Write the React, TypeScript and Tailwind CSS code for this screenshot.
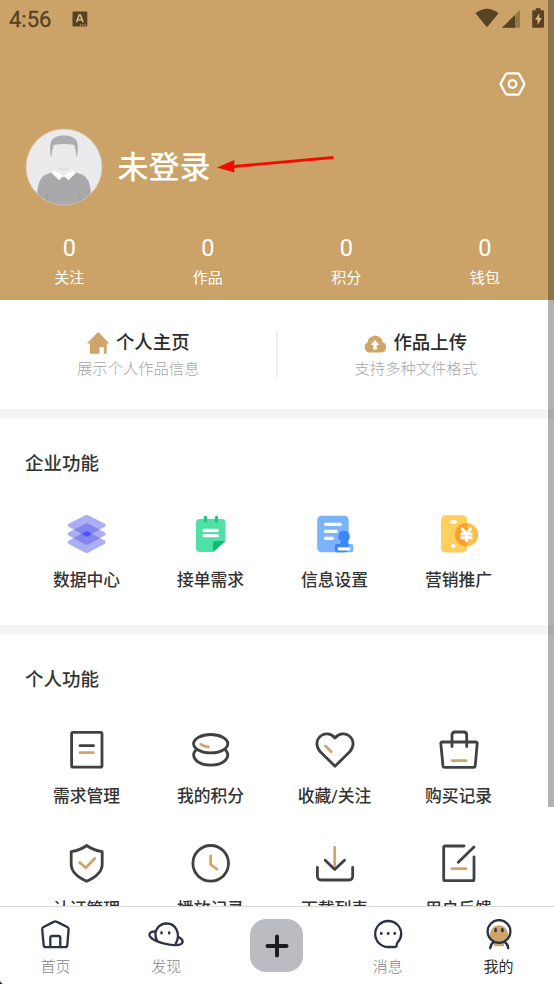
import type { ReactNode } from "react";
import clsx from "clsx";

interface MenuItem {
  label: string;
  icon: ReactNode;
}

const DARK = "#414141";
const GOLD = "#cfa56a";
const NAVY = "#2c3246";

function LineIcon({ children }: { children: ReactNode }) {
  return (
    <svg
      className="h-10 w-10"
      viewBox="0 0 40 40"
      fill="none"
      stroke={DARK}
      strokeWidth="2.8"
      strokeLinecap="round"
      strokeLinejoin="round"
    >
      {children}
    </svg>
  );
}

function NavIcon({ children }: { children: ReactNode }) {
  return (
    <svg
      className="h-8 w-9"
      viewBox="0 0 36 32"
      fill="none"
      stroke={NAVY}
      strokeWidth="2.3"
      strokeLinecap="round"
      strokeLinejoin="round"
    >
      {children}
    </svg>
  );
}

const stats = [
  { label: "关注", value: 0 },
  { label: "作品", value: 0 },
  { label: "积分", value: 0 },
  { label: "钱包", value: 0 },
];

const companyItems: MenuItem[] = [
  {
    label: "数据中心",
    icon: (
      <svg className="h-10 w-10" viewBox="0 0 40 40">
        <g fill="#5a5dea" fillOpacity="0.5">
          <path d="M18.3 1.2q1.4-.8 2.8 0L37.5 9.6q2.4 1.6 0 3.4L21.1 21.8q-1.4.8-2.8 0L1.9 13q-2.4-1.8 0-3.4z" />
          <path d="M18.3 9.7q1.4-.8 2.8 0L37.5 18.3q2.4 1.7 0 3.4L21.1 30.4q-1.4.8-2.8 0L1.9 21.7q-2.4-1.7 0-3.4z" />
          <path d="M18.3 17.8q1.4-.8 2.8 0L37.5 26.6q2.4 1.7 0 3.4L21.1 38.7q-1.4.8-2.8 0L1.9 30q-2.4-1.7 0-3.4z" />
        </g>
        <path d="M19.7 17.3l5 2.7-5 2.7-5-2.7z" fill="#4b4ffb" />
      </svg>
    ),
  },
  {
    label: "接单需求",
    icon: (
      <svg className="h-10 w-10" viewBox="0 0 40 40">
        <path d="M9 5h21.5a4 4 0 0 1 4 4v18L22 38H9a4 4 0 0 1-4-4V9a4 4 0 0 1 4-4z" fill="#4ee0a4" />
        <path d="M34.5 27L22 38v-8.5a2.5 2.5 0 0 1 2.5-2.5z" fill="#0fbd71" />
        <path d="M14.5 3.5v3.5M25.5 3.5v3.5" stroke="#1fc580" strokeWidth="3.4" strokeLinecap="round" />
        <path d="M13 16.3h13.5M13 21.7h13.5" stroke="#fff" strokeWidth="3.2" strokeLinecap="round" />
      </svg>
    ),
  },
  {
    label: "信息设置",
    icon: (
      <svg className="h-10 w-10" viewBox="0 0 40 40">
        <rect x="2.2" y="1.8" width="31.5" height="36.5" rx="4.5" fill="#7cb4fc" />
        <path d="M10.5 10.3h14.8M10.5 17.3h10.8M10.5 24.3h7" stroke="#fff" strokeWidth="3.2" strokeLinecap="round" />
        <rect x="19.8" y="30" width="18.5" height="8.3" rx="2" fill="#7cb4fc" />
        <path d="M21.8 30h11.9v4.3a4 4 0 0 1-4 4h-7.9a2 2 0 0 1-2-2V32a2 2 0 0 1 2-2z" fill="#3b86f7" />
        <path d="M29 16.8a5.7 5.7 0 0 1 3.4 10.3c-.4 1.3.3 2.9 1.3 2.900h-9.400c1 0 1.700-1.600 1.300-2.900A5.700 5.700 0 0 1 29 16.800z" fill="#3b86f7" />
        <rect x="22.7" y="33.2" width="12.5" height="3.4" rx="1" fill="#fff" />
      </svg>
    ),
  },
  {
    label: "营销推广",
    icon: (
      <svg className="h-10 w-10" viewBox="0 0 40 40">
        <rect x="2" y="1.2" width="26" height="37.4" rx="4.5" fill="#fdcf5c" />
        <circle cx="27.4" cy="20.7" r="11.8" fill="#fdbf4b" />
        <path d="M28 8.9v23.600a11.800 11.800 0 0 1 0-23.600z" fill="#fba030" />
        <rect x="11" y="6.2" width="7" height="3.6" rx="1.8" fill="#fff" />
        <circle cx="14.3" cy="32" r="2.1" fill="#fff" />
        <path d="M23.3 15l4 4.8 4-4.8M27.4 20v6.5M22.6 20h9.6M22.6 23.8h9.6" fill="none" stroke="#fff" strokeWidth="3" strokeLinecap="round" />
      </svg>
    ),
  },
];

const personalItems: MenuItem[] = [
  {
    label: "需求管理",
    icon: (
      <LineIcon>
        <rect x="4.6" y="2.4" width="30.4" height="34.8" rx="1.5" />
        <path d="M13 15.7h13.5" />
        <path d="M13 22.7h13.5" stroke={GOLD} />
      </LineIcon>
    ),
  },
  {
    label: "我的积分",
    icon: (
      <LineIcon>
        <ellipse cx="19.7" cy="13.7" rx="17.1" ry="9.2" />
        <path d="M5.3 19.5C-1.5 26.5 6 35.2 19.7 35.2S41 26.5 34.1 19.5" />
        <path d="M9.8 14.3q3 2.2 7.7 2.5" stroke={GOLD} />
      </LineIcon>
    ),
  },
  {
    label: "收藏/关注",
    icon: (
      <LineIcon>
        <path d="M20 36.2L5.3 21.8C.4 16.6 1.2 9.5 5.6 6c4.5-3.5 10.7-2.6 14.4 2 3.7-4.6 9.9-5.5 14.4-2 4.400 3.500 5.200 10.600.3 15.800z" />
        <path d="M10.3 16l6 5.8" stroke={GOLD} />
      </LineIcon>
    ),
  },
  {
    label: "购买记录",
    icon: (
      <LineIcon>
        <path d="M3.2 12h33.6q1.5 0 1.4 1.5L36.2 36q-.2 1.4-1.6 1.4H5.6Q4.2 37.4 4 36L1.8 13.5Q1.7 12 3.2 12z" />
        <path d="M13 16.5V5q0-3 3-3h8.7q3 0 3 3v11.5" />
        <path d="M13.2 30.7h13.8" stroke={GOLD} />
      </LineIcon>
    ),
  },
  {
    label: "认证管理",
    icon: (
      <LineIcon>
        <path d="M19.7 2.5q6.5 4.8 15.5 6.2v12.5C35.2 29.5 28 34.5 19.7 38.3 11.4 34.5 4.2 29.5 4.2 21.2V8.7q9-1.4 15.5-6.2z" />
        <path d="M12.7 19.5l6 5.3 9-9.3" stroke={GOLD} />
      </LineIcon>
    ),
  },
  {
    label: "播放记录",
    icon: (
      <LineIcon>
        <circle cx="19.7" cy="20.3" r="17.8" />
        <path d="M19.7 12.8v8.9l6.2 4.5" stroke={GOLD} />
      </LineIcon>
    ),
  },
  {
    label: "下载列表",
    icon: (
      <LineIcon>
        <path d="M19.7 4.5V23" stroke={GOLD} />
        <path d="M10.2 17.2l9.5 9.3 9.8-9.3" />
        <path d="M2.4 24.5V33q0 4 4 4h27.3q4 0 4-4v-8.5" />
      </LineIcon>
    ),
  },
  {
    label: "用户反馈",
    icon: (
      <LineIcon>
        <path d="M25 3H6.2Q4.7 3 4.7 4.5v31.7q0 1.5 1.5 1.5h27.3q1.5 0 1.5-1.5V14" />
        <path d="M19.3 19.2L35 3.9" />
        <path d="M13 25.7h14" stroke={GOLD} />
      </LineIcon>
    ),
  },
];

function StatusBar() {
  return (
    <div className="flex h-10 items-center pb-1 pl-[9px] pr-[10px] text-[#574222]">
      <span className="mt-1 text-[22px] leading-none [-webkit-text-stroke:0.3px_#574222]">4:56</span>
      <svg className="mt-px ml-[21px] h-4 w-4" viewBox="0 0 16 16">
        <rect x="0.5" y="0.5" width="14.8" height="15" rx="1.3" fill="currentColor" />
        <path d="M4.5 11.2L7.2 4h1.2l2.7 7.2M5.8 8.7h4" fill="none" stroke="#dbb987" strokeWidth="1.6" />
        <path d="M8 14h1.2M10.3 14h1.2M12.5 14h1.2" stroke="#dbb987" strokeWidth="1.2" />
      </svg>
      <svg className="ml-auto h-5 w-6" viewBox="0 0 24 20">
        <path d="M.5 5.3q11.5-9.300 23 0L12 19.300z" fill="currentColor" />
      </svg>
      <svg className="ml-[3px] h-5 w-[18px]" viewBox="0 0 18 20">
        <path d="M18 2v17.8H0z" fill="currentColor" fillOpacity="0.45" />
        <path d="M13 6.950V19.800H0z" fill="currentColor" />
      </svg>
      <svg className="ml-3 h-5 w-3" viewBox="0 0 12 20">
        <path d="M3.7.3h4.8v2H11a1 1 0 0 1 1 1v15.5a1 1 0 0 1-1 1H1.2a1 1 0 0 1-1-1V3.3a1 1 0 0 1 1-1h2.5z" fill="currentColor" />
        <path d="M7.3 5.3L3 11.8h2.6v5.3l4.2-7H7.3z" fill="#dbb987" />
      </svg>
    </div>
  );
}

function Avatar() {
  return (
    <svg className="h-[78px] w-[78px]" viewBox="0 0 78 78">
      <defs>
        <clipPath id="avatar-clip">
          <circle cx="39" cy="39" r="38" />
        </clipPath>
      </defs>
      <circle cx="39" cy="39" r="38" fill="#ebebed" stroke="#dcc9aa" />
      <g clipPath="url(#avatar-clip)">
        <path d="M12 68c.5-9 2-15 5-18.5 2-2.500 5-3.800 10.500-5l11.500 5 11.500-5c5.500 1.200 8.500 2.500 10.500 5 3 3.500 5 9.500 5 18.500l-4 10H14z" fill="#a9a9ab" />
        <path d="M31 40h15.500v4.500l-7.800 5-7.700-5z" fill="#ebebed" />
        <path d="M34 40q5 3.500 10 0" fill="none" stroke="#d5d5d7" />
        <path d="M30 42.3q3 3.700 8.400 5.200l-4.100 4.700-7.800-7.200zM47.500 42.300q-3 3.700-8.400 5.200l4.100 4.700 7.800-7.200z" fill="#fff" />
        <path d="M26 29.500c-1.400-8-1.300-13 .7-17C28.800 9 33 7.500 39 7.500s10 1.500 12.300 5c2 4 2 9 .6 17-.8-3-1.200-8-2.900-12.500-6.200-1.400-14-1.400-20.200 0-1.600 4.500-2 9.500-2.800 12.500z" fill="#aeaeb0" />
        <path d="M22 66v12M55 66v12" stroke="#8f8f92" strokeWidth="0.7" />
      </g>
    </svg>
  );
}

function ProfileHeader() {
  return (
    <header className="h-[300px] shrink-0 bg-[#cba368] text-white">
      <StatusBar />
      <div className="flex justify-end pt-[30px] pr-[28px]">
        <svg className="h-7 w-7" viewBox="0 0 28 28" fill="none" stroke="#fff" strokeWidth="2.3">
          <path d="M9.2 3.3h10.600q1 0 1.500.9l4.700 8.700q.6 1.100 0 2.200l-4.700 8.700q-.5.900-1.500.9H9.200q-1 0-1.500-.9L3 15.100q-.6-1.100 0-2.200l4.700-8.700q.5-.9 1.500-.9z" />
          <circle cx="14.5" cy="14" r="3.8" />
        </svg>
      </div>
      <div className="mt-[30px] flex h-[78px] items-center pl-[24.5px]">
        <Avatar />
        <h1 className="ml-[15px] text-[31px] leading-none font-medium">未登录</h1>
        <svg className="-mt-1 ml-[5px] h-[18px] w-[120px]" viewBox="0 0 120 18">
          <path d="M18 10.5L117.5 1.500" stroke="#f40b05" strokeWidth="2.8" />
          <path d="M1 11.5L18.3 4v12.500z" fill="#f40b05" />
        </svg>
      </div>
      <div className="mt-[29px] grid grid-cols-4 text-center">
        {stats.map((s) => (
          <div key={s.label}>
            <div className="pt-px text-[23.5px] leading-6">{s.value}</div>
            <div className="mt-2 text-[15px] leading-5">{s.label}</div>
          </div>
        ))}
      </div>
    </header>
  );
}

function QuickLinks() {
  return (
    <section className="flex h-[109px] shrink-0 pt-[30px]">
      <div className="flex-1 pt-px">
        <div className="flex h-6 items-center justify-center">
          <svg className="mr-[7px] h-[22px] w-[22px]" viewBox="0 0 22 22">
            <path d="M10.8.3Q11.3 0 11.8.4L21.7 10.7q.6.8-.4.8H19.7V21q0 .8-.8.8H16.8V15.3h-4.3v6.5H3.7q-.8 0-.8-.8V11.5H1q-1 0-.5-.8z" fill={GOLD} />
          </svg>
          <h2 className="text-[18.4px] font-medium text-[#2b2b2b]">个人主页</h2>
        </div>
        <p className="text-center text-[15.3px] leading-7 font-light text-[#a5a5a5]">展示个人作品信息</p>
      </div>
      <div className="-ml-px h-12 w-0.5 bg-[#efefef]" />
      <div className="flex-1 pt-px">
        <div className="flex h-6 items-center justify-center">
          <svg className="mr-[7px] h-[22px] w-[22px]" viewBox="0 0 22 22">
            <path d="M5.7 20.5A5.4 5.4 0 0 1 3.6 10.3 6 6 0 0 1 7.5 5a5.500 5.500 0 0 1 7.800 0A6 6 0 0 1 18.500 10 5.400 5.400 0 0 1 16.600 20.500z" fill={GOLD} />
            <path d="M11 8l4.300 5h-2.500v4.500H9.300V13H6.700z" fill="#fff" />
          </svg>
          <h2 className="text-[18.4px] font-medium text-[#2b2b2b]">作品上传</h2>
        </div>
        <p className="text-center text-[15.3px] leading-7 font-light text-[#a5a5a5]">支持多种文件格式</p>
      </div>
    </section>
  );
}

function MenuSection({ title, items, className }: { title: string; items: MenuItem[]; className?: string }) {
  return (
    <section className={clsx("shrink-0 border-t-10 border-[#f5f5f5] px-[25px] pt-[33px]", className)}>
      <h2 className="text-[18.5px] leading-6 font-medium text-[#333]">{title}</h2>
      <div className="mt-[38px] grid w-[496px] grid-cols-4 gap-y-[30px]">
        {items.map((item) => (
          <div key={item.label} className="-ml-px flex flex-col items-center">
            {item.icon}
            <span className="mt-[9px] text-[16.8px] leading-[34px] font-medium text-[#333]">{item.label}</span>
          </div>
        ))}
      </div>
    </section>
  );
}

const tabs: MenuItem[] = [
  {
    label: "首页",
    icon: (
      <NavIcon>
        <path d="M16.7 2.900q1.600-.9 3.200 0L30.300 8q1.400.8 1.300 2.400L30.300 26.300q-.2 1.800-2 1.800H8.700q-1.800 0-2-1.800L5.200 10.400Q5.100 8.800 6.500 8z" />
        <path d="M13.3 28v-9q0-2 2-2h6q2 0 2 2v9" />
      </NavIcon>
    ),
  },
  {
    label: "发现",
    icon: (
      <NavIcon>
        <path d="M9 21.500C4.500 12.500 10.500 4.500 18.700 4.500c9.300 0 14.500 10.500 8.800 20.700" />
        <path d="M6.300 12.500C2.500 12.500.8 14.500 1.800 17c1.500 3.500 10 7.300 19.500 8.600 7.500 1 12.700.3 13.300-2.300.4-1.800-1-3.500-3.600-5" />
        <path d="M13.5 13.5v.8M21.2 13.5v.8" strokeWidth="2.5" />
      </NavIcon>
    ),
  },
  {
    label: "消息",
    icon: (
      <NavIcon>
        <path d="M18.2 28A13 13 0 1 1 31.2 15c0 3.800-1.500 6.300-3.700 8.600-.9 1-.9 1.800-.8 2.800.1 1-.5 1.600-1.500 1.600z" />
        <path d="M11.3 14.5h.01M18.2 14.5h.01M24.7 14.5h.01" strokeWidth="2.9" />
      </NavIcon>
    ),
  },
  {
    label: "我的",
    icon: (
      <NavIcon>
        <path d="M18 6.300c5 0 9 4.200 9 9.200 0 4-2 6.500-4 8.200v3.500H13v-3.500c-2-1.700-4-4.200-4-8.200 0-5 4-9.200 9-9.200z" fill={GOLD} stroke="none" />
        <circle cx="18" cy="12.5" r="11.4" />
        <path d="M14.6 10.3v1.800M21.400 10.300v1.800" strokeWidth="2.5" />
        <path d="M9.3 29.3c0-3 1-4.500 3.300-6M27.200 29.300c0-3-1-4.500-3.300-6" />
      </NavIcon>
    ),
  },
];

function Tab({ item, active }: { item: MenuItem; active?: boolean }) {
  return (
    <button className="flex flex-col items-center pt-3">
      {item.icon}
      <span className={clsx("mt-1.5 text-[15px] leading-5", active ? "text-[#2b2b2b]" : "font-light text-[#858585]")}>
        {item.label}
      </span>
    </button>
  );
}

function BottomNav() {
  return (
    <nav className="grid h-[78px] shrink-0 grid-cols-5 border-t border-[#d9d9d9] bg-white">
      <Tab item={tabs[0]} />
      <Tab item={tabs[1]} />
      <div className="flex justify-center pt-3">
        <button className="flex h-[53px] w-[53px] items-center justify-center rounded-2xl bg-[#bbbcc1]">
          <svg className="h-6 w-6" viewBox="0 0 24 24" stroke="#1b1c22" strokeWidth="4" strokeLinecap="round">
            <path d="M12 2.5v19M2.5 12h19" />
          </svg>
        </button>
      </div>
      <Tab item={tabs[2]} />
      <Tab item={tabs[3]} active />
    </nav>
  );
}

export default function App() {
  return (
    <div className="relative flex h-[984px] w-[554px] flex-col overflow-hidden bg-white font-[Roboto,'Noto_Sans_CJK_SC',sans-serif]">
      <main className="flex min-h-0 flex-1 flex-col overflow-hidden">
        <ProfileHeader />
        <QuickLinks />
        <MenuSection title="企业功能" items={companyItems} className="h-[216px]" />
        <MenuSection title="个人功能" items={personalItems} />
      </main>
      <BottomNav />
      {/* Scroll indicator */}
      <div className="absolute top-0 right-0 h-[807px] w-1.5 bg-black/30" />
      <svg className="absolute bottom-0 left-0 h-1 w-1" viewBox="0 0 4 4">
        <path d="M0 0q0 3 3 4H0z" fill="#111" />
      </svg>
    </div>
  );
}
